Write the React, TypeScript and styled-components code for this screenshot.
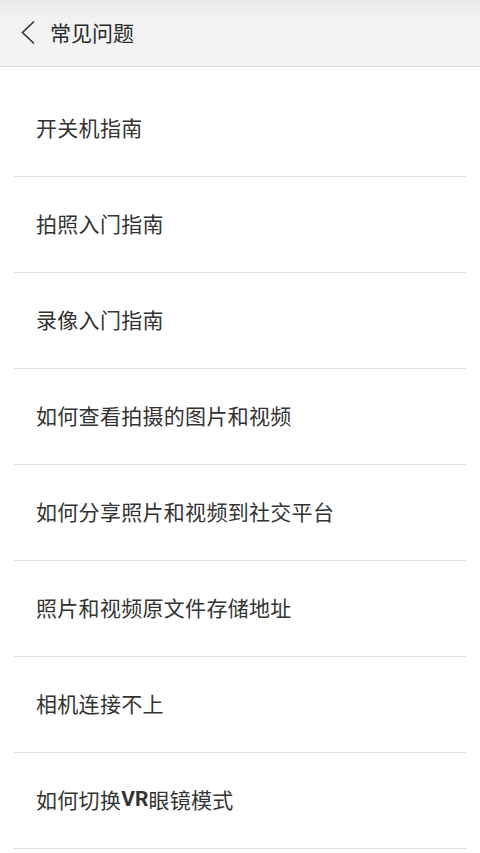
import React from "react";
import styled, { createGlobalStyle } from "styled-components";

const Global = createGlobalStyle`
  html, body { margin: 0; padding: 0; background: #ffffff; }
  body { font-family: "Noto Sans CJK SC", "Noto Sans", sans-serif; }
`;

const Page = styled.div`
  width: 480px;
  min-height: 853px;
  background: #ffffff;
  display: flex;
  flex-direction: column;
`;

const Header = styled.header`
  height: 67px;
  box-sizing: border-box;
  display: flex;
  align-items: center;
  padding-left: 18px;
  padding-bottom: 1px;
  gap: 12px;
  background: linear-gradient(#e9e9e9 0%, #f2f2f2 30%, #f4f4f4 100%);
  border-bottom: 1px solid #dcdcdc;
`;

const BackButton = styled.button`
  width: 20px;
  height: 30px;
  padding: 0;
  border: none;
  background: transparent;
  display: flex;
  align-items: center;
  justify-content: center;
`;

const Title = styled.h1`
  margin: 0;
  font-size: 21px;
  font-weight: 400;
  color: #2a2a2a;
  line-height: 1;
`;

const List = styled.ul`
  list-style: none;
  margin: 0;
  padding: 14px 14px 0;
`;

const Item = styled.li`
  height: 96px;
  box-sizing: border-box;
  display: flex;
  align-items: center;
  padding-left: 22px;
  padding-bottom: 4px;
  font-size: 21px;
  letter-spacing: 0.3px;
  color: #333333;
  border-bottom: 1px solid #e0e0e0;
`;

const Latin = styled.span`
  font-family: "Roboto", "Noto Sans", sans-serif;
  font-weight: 700;
  letter-spacing: 0;
`;

const items: React.ReactNode[] = [
  "开关机指南",
  "拍照入门指南",
  "录像入门指南",
  "如何查看拍摄的图片和视频",
  "如何分享照片和视频到社交平台",
  "照片和视频原文件存储地址",
  "相机连接不上",
  <>
    如何切换<Latin>VR</Latin>眼镜模式
  </>,
];

export default function App() {
  return (
    <>
      <Global />
      <Page>
        <Header>
          <BackButton aria-label="返回">
            <svg width="16" height="26" viewBox="0 0 16 26">
              <path d="M14 1.5 L2.5 12.5 L14 23.5" fill="none" stroke="#333" strokeWidth="1.6" />
            </svg>
          </BackButton>
          <Title>常见问题</Title>
        </Header>
        <List>
          {items.map((t, i) => (
            <Item key={i}>{t}</Item>
          ))}
        </List>
      </Page>
    </>
  );
}
